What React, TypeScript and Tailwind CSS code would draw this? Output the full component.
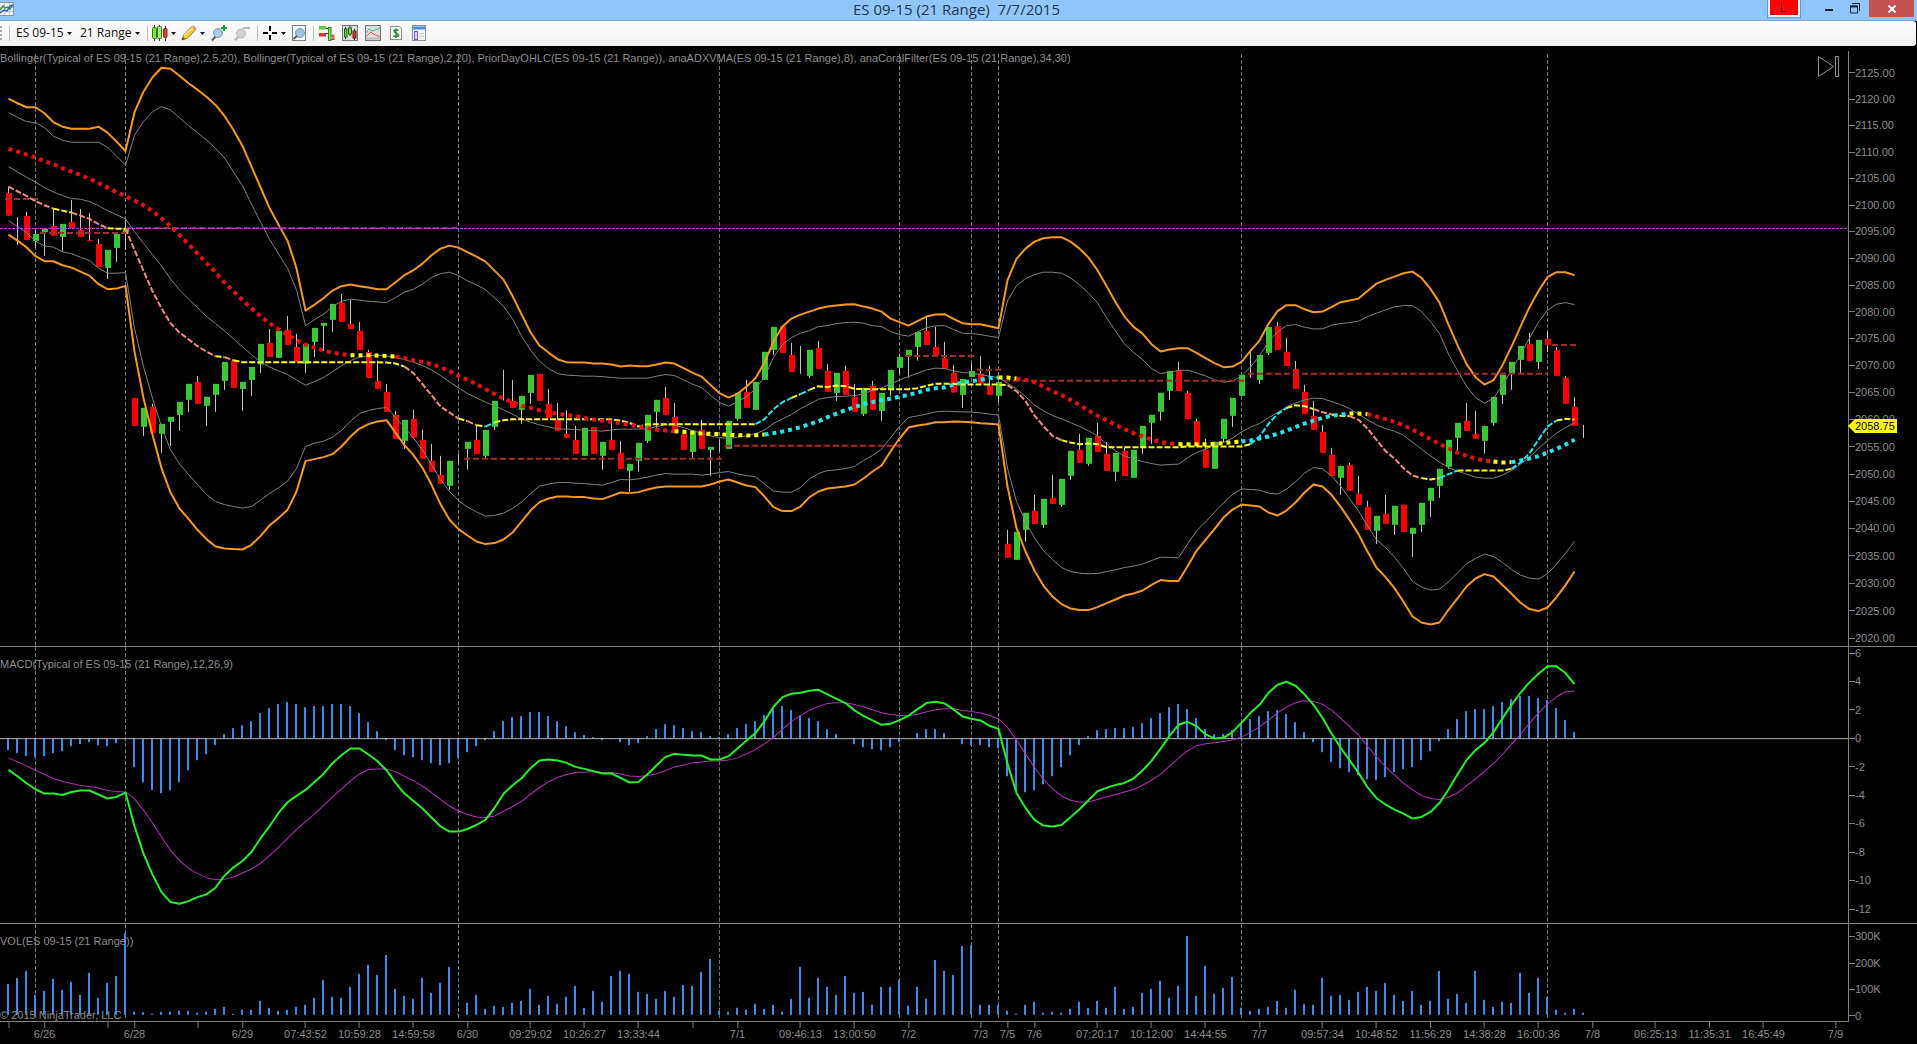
import React from "react";

/* ------------------------------------------------------------------ */
/* Geometry: one bar every 9 units; levels are stored in thirds of a   */
/* unit, counted down from the given origin.                           */
/* ------------------------------------------------------------------ */
const STEP = 9;
const barX = (i: number) => STEP * i + 8.5;
const levels = (origin: number, values: number[]) => values.map((v) => origin + v / 3);

const upperOuter = [
  ...levels(50, [146, 160, 172, 172, 190, 217, 230, 236, 236, 236, 230, 248, 275, 303, 187, 125, 82, 53, 56, 77, 100, 119, 140, 165, 198, 240, 288, 350, 412, 474, 524, 572, 655, 782, 764, 745, 722, 709, 704, 709, 713, 718, 718, 697, 676, 661, 641, 616, 596, 587, 593]),
  ...levels(230, [67, 80, 95, 122, 149, 198, 253, 307, 347, 368, 388, 397, 398, 398, 401, 401, 404, 410, 407, 409, 409, 404, 398, 401, 415, 428, 440, 465, 490, 503, 492, 470, 445, 398, 335, 290, 266, 254, 245, 236, 230, 227, 224, 223, 230, 236, 245, 266, 277, 287, 274, 260, 254]),
  ...levels(220, [283, 297, 310, 313, 313, 319, 325, 181, 117, 86, 65, 55, 52, 52, 65, 86, 113, 151, 198, 246, 290, 321, 341, 373, 395, 389, 385, 385, 399, 415, 430, 442, 440, 426, 393, 362, 312, 274, 256, 256, 268, 277, 275, 262, 247, 242, 236, 213, 191, 180, 170, 160, 155, 174, 207, 248, 314, 376, 432, 472, 494, 481, 436, 380, 320, 262, 213, 172, 157, 157, 166]),
];
const upperInner = [
  ...levels(50, [188, 202, 215, 218, 233, 259, 271, 277, 277, 277, 277, 292, 318, 346, 256, 214, 185, 170, 180, 203, 227, 248, 270, 295, 324, 366, 407, 463, 516, 568, 612, 655, 720, 827, 809, 793, 770, 754, 748, 751, 754, 756, 758, 743, 727, 718, 702, 683, 671, 667, 677]),
  ...levels(230, [153, 165, 179, 204, 229, 267, 318, 361, 394, 416, 431, 436, 437, 439, 439, 440, 443, 445, 445, 445, 445, 439, 434, 437, 450, 463, 473, 496, 518, 529, 516, 500, 478, 441, 382, 344, 323, 310, 302, 290, 287, 281, 278, 277, 280, 287, 290, 305, 314, 319, 306, 293, 288]),
  ...levels(220, [317, 329, 340, 341, 344, 349, 353, 243, 197, 176, 164, 157, 157, 160, 174, 195, 219, 249, 293, 333, 373, 397, 419, 446, 461, 457, 452, 451, 459, 468, 480, 487, 484, 469, 441, 409, 366, 336, 317, 314, 322, 327, 327, 316, 311, 308, 304, 290, 280, 270, 261, 257, 257, 275, 305, 341, 403, 452, 499, 533, 550, 536, 495, 452, 404, 355, 307, 271, 253, 248, 254]),
];
const middle = [
  ...levels(50, [350, 366, 382, 396, 413, 426, 437, 446, 448, 455, 467, 482, 494, 507, 545, 580, 614, 648, 687, 720, 747, 773, 800, 821, 843, 867, 891, 914, 936, 951, 963, 974, 990, 1006, 995, 983, 965, 948, 932, 922, 917, 916, 918, 923, 929, 937, 947, 960, 977, 996, 1014]),
  ...levels(230, [491, 504, 517, 527, 540, 553, 567, 577, 585, 591, 597, 598, 599, 601, 602, 604, 600, 598, 598, 598, 597, 590, 585, 586, 593, 602, 610, 618, 623, 626, 622, 618, 611, 601, 581, 567, 554, 536, 523, 508, 503, 500, 499, 497, 493, 481, 474, 463, 450, 440, 430, 420, 415]),
  ...levels(220, [446, 453, 458, 460, 464, 469, 473, 490, 507, 530, 556, 573, 587, 597, 608, 620, 633, 648, 673, 693, 708, 718, 725, 731, 736, 734, 733, 714, 698, 688, 676, 668, 655, 636, 622, 611, 594, 578, 561, 549, 540, 535, 536, 545, 554, 566, 583, 600, 615, 626, 634, 646, 667, 688, 708, 727, 743, 754, 763, 772, 775, 775, 766, 752, 733, 712, 686, 662, 640, 623, 609]),
];
const lowerInner = [
  ...levels(50, [512, 530, 548, 574, 588, 592, 606, 611, 622, 632, 655, 670, 670, 668, 835, 950, 1045, 1130, 1200, 1242, 1274, 1304, 1334, 1355, 1364, 1370, 1375, 1370, 1351, 1331, 1314, 1294, 1256, 1190, 1180, 1174, 1162, 1142, 1114, 1091, 1082, 1076, 1073, 1102, 1132, 1165, 1200, 1245, 1290, 1325, 1352]),
  ...levels(230, [832, 846, 859, 857, 850, 836, 817, 791, 769, 763, 758, 758, 760, 761, 764, 766, 758, 749, 750, 747, 742, 736, 731, 733, 733, 733, 736, 733, 728, 725, 732, 737, 741, 763, 784, 787, 787, 773, 747, 731, 722, 720, 716, 710, 692, 677, 658, 624, 590, 563, 558, 553, 546]),
  ...levels(220, [574, 575, 576, 577, 579, 583, 586, 745, 845, 905, 954, 993, 1019, 1043, 1055, 1060, 1062, 1061, 1055, 1050, 1043, 1039, 1033, 1022, 1012, 1013, 1014, 973, 933, 907, 877, 849, 824, 807, 809, 811, 820, 823, 808, 786, 760, 743, 747, 768, 799, 836, 873, 918, 959, 983, 1012, 1046, 1085, 1102, 1111, 1108, 1086, 1059, 1032, 1016, 1003, 1010, 1028, 1049, 1066, 1075, 1078, 1062, 1033, 1000, 965]),
];
const lowerOuter = [
  ...levels(50, [554, 572, 592, 619, 634, 634, 646, 653, 665, 677, 703, 718, 716, 708, 905, 1045, 1155, 1255, 1328, 1376, 1407, 1440, 1468, 1490, 1496, 1498, 1499, 1485, 1459, 1427, 1405, 1380, 1325, 1234, 1228, 1222, 1213, 1190, 1160, 1136, 1123, 1115, 1111, 1148, 1186, 1216, 1254, 1305, 1363, 1410, 1438]),
  ...levels(230, [917, 935, 943, 940, 929, 908, 875, 842, 817, 806, 800, 800, 802, 802, 806, 808, 798, 788, 790, 787, 779, 773, 770, 770, 770, 770, 770, 764, 755, 749, 758, 767, 772, 800, 832, 844, 844, 830, 802, 785, 776, 773, 770, 764, 746, 725, 707, 665, 626, 593, 587, 583, 577]),
  ...levels(220, [607, 605, 606, 607, 610, 612, 614, 800, 925, 995, 1052, 1098, 1130, 1153, 1166, 1171, 1171, 1162, 1150, 1139, 1127, 1121, 1112, 1095, 1081, 1084, 1084, 1040, 993, 960, 928, 893, 869, 854, 857, 860, 878, 887, 872, 848, 818, 794, 800, 825, 860, 900, 943, 995, 1044, 1072, 1105, 1146, 1190, 1208, 1214, 1208, 1170, 1136, 1100, 1076, 1063, 1070, 1096, 1122, 1149, 1168, 1174, 1163, 1132, 1096, 1055]),
];
const adxvma = [
  ...levels(50, [410, 424, 438, 454, 466, 476, 482, 488, 497, 507, 523, 535, 536, 536, 600, 663, 724, 775, 820, 848, 868, 889, 905, 919, 922, 931, 937, 937, 937, 937, 937, 937, 937, 937, 937, 937, 937, 937, 937, 937, 937, 937, 938, 941, 950, 970, 1003, 1036, 1070, 1088, 1106]),
  ...levels(230, [574, 586, 590, 578, 571, 568, 568, 568, 568, 568, 568, 568, 568, 568, 568, 568, 569, 572, 579, 590, 583, 583, 583, 583, 583, 583, 583, 583, 583, 583, 583, 583, 583, 568, 538, 517, 504, 493, 480, 469, 472, 467, 469, 477, 478, 478, 478, 478, 478, 478, 475, 468, 462]),
  ...levels(220, [492, 492, 494, 494, 494, 494, 494, 496, 514, 543, 587, 619, 648, 661, 668, 673, 671, 673, 682, 682, 682, 682, 682, 682, 682, 682, 682, 680, 680, 680, 680, 680, 680, 680, 673, 650, 612, 582, 565, 556, 559, 568, 577, 584, 588, 589, 600, 626, 660, 694, 716, 745, 767, 775, 779, 775, 763, 752, 752, 752, 752, 752, 752, 747, 728, 700, 660, 620, 602, 597, 599]),
];
const coral = [
  ...levels(50, [297, 305, 314, 322, 334, 343, 355, 365, 375, 386, 399, 413, 427, 439, 452, 466, 484, 505, 528, 556, 583, 611, 640, 667, 698, 724, 751, 775, 799, 820, 838, 855, 871, 884, 893, 902, 908, 913, 916, 916, 916, 917, 918, 920, 925, 931, 936, 943, 952, 964, 978]),
  ...levels(230, [450, 463, 478, 493, 506, 518, 528, 534, 541, 547, 552, 556, 559, 564, 569, 573, 576, 580, 585, 590, 595, 600, 602, 604, 606, 608, 611, 612, 613, 615, 616, 617, 616, 614, 610, 605, 599, 592, 583, 574, 562, 551, 541, 532, 523, 517, 511, 507, 500, 495, 488, 480, 475]),
  ...levels(220, [503, 494, 488, 484, 480, 475, 473, 473, 476, 480, 487, 500, 514, 526, 540, 555, 572, 588, 601, 615, 628, 640, 649, 659, 666, 671, 673, 673, 673, 673, 672, 670, 667, 665, 662, 656, 650, 642, 632, 622, 611, 602, 594, 588, 584, 581, 581, 583, 590, 598, 606, 616, 629, 643, 658, 672, 686, 698, 707, 716, 722, 725, 728, 727, 722, 716, 709, 698, 687, 674, 660]),
];

type Run = [until: number, color: string];
const SALMON = "#f08c80";
const YELLOW = "#ffff1e";
const CYAN = "#22e6ee";
const RED = "#e81010";
const adxvmaRuns: Run[] = [
  [5, SALMON], [7, YELLOW], [11, SALMON], [13, YELLOW], [23, SALMON], [24, YELLOW], [25, SALMON], [44, YELLOW], [50, SALMON], [51, YELLOW],
  [52, SALMON], [53, YELLOW], [54, CYAN], [83, YELLOW], [87, CYAN], [88, YELLOW], [89, CYAN], [111, YELLOW], [117, SALMON], [138, YELLOW],
  [142, CYAN], [145, YELLOW], [147, SALMON], [149, YELLOW], [157, SALMON], [159, YELLOW], [161, CYAN], [167, YELLOW], [172, CYAN], [174, YELLOW],
];
const coralRuns: Run[] = [
  [38, RED], [43, YELLOW], [74, RED], [84, YELLOW], [110, CYAN], [112, YELLOW], [130, RED], [137, YELLOW], [149, CYAN], [151, YELLOW], [165, RED], [167, YELLOW], [174, CYAN],
];

/* Candles: direction (u = up, d = down, n = unchanged), body top, body bottom, high, low */
type Candle = ["u" | "d" | "n", number, number, number?, number?];
const candleGroups: { first: number; origin: number; rows: Candle[] }[] = [
  {
    first: 0,
    origin: 50,
    rows: [
      ["d", 429, 497, 410], ["n", 501, 585], ["d", 498, 570, 486], ["u", 552, 573, 540, 594], ["u", 537, 546, 537, 618], ["d", 528, 557, 476],
      ["u", 522, 561, 522, 605], ["d", 516, 534, 450], ["d", 540, 561, 477], ["d", 570, 573, 489], ["d", 582, 651, 567], ["u", 600, 654, 600, 687],
      ["u", 552, 594, 552, 636], ["u", 537, 546, 507, 600], ["d", 1044, 1128], ["u", 1074, 1131, 1074, 1158], ["d", 1071, 1149, 1062],
      ["u", 1122, 1152, 1122, 1209], ["u", 1101, 1116, 1101, 1188], ["u", 1056, 1095, 1056, 1143], ["u", 1002, 1050, 1002, 1086], ["d", 996, 1062, 978],
      ["u", 1041, 1068, 1041, 1128], ["u", 1002, 1035, 1002, 1086], ["u", 936, 993, 936, 1020], ["d", 933, 1014], ["u", 996, 1017, 996, 1083],
      ["u", 951, 990, 951, 1038], ["u", 882, 944, 882, 969], ["d", 879, 921, 837], ["u", 843, 924], ["d", 840, 885, 798], ["d", 891, 936, 852],
      ["u", 882, 942, 882, 969], ["u", 834, 876, 834, 921], ["u", 819, 828, 819, 903], ["u", 762, 810, 762, 846], ["d", 759, 816, 732],
      ["d", 822, 837, 750], ["d", 843, 900, 816], ["d", 906, 984, 900], ["d", 993, 1017, 932], ["d", 1026, 1086, 1002], ["d", 1095, 1167, 1083],
      ["u", 1110, 1173, 1110, 1197], ["d", 1107, 1164, 1080], ["d", 1170, 1227, 1140], ["d", 1233, 1266, 1182], ["d", 1275, 1302, 1218],
      ["u", 1233, 1308, 1233, 1320], ["n", 1212, 1240], ["u", 1176, 1197, 1176, 1260],
    ],
  },
  {
    first: 52,
    origin: 230,
    rows: [
      ["d", 630, 672, 586], ["u", 600, 678, 600, 687], ["u", 513, 591, 513, 600], ["n", 420, 512], ["d", 513, 534, 450], ["u", 498, 540, 498, 582],
      ["u", 435, 489, 435, 522], ["d", 432, 513], ["d", 522, 564, 477], ["d", 570, 603, 519], ["d", 612, 624, 541], ["d", 630, 672, 588],
      ["u", 594, 678], ["d", 591, 672], ["u", 636, 678, 636, 720], ["d", 630, 660, 576], ["d", 669, 717, 633], ["u", 702, 723, 702, 786],
      ["u", 639, 693, 639, 726], ["u", 555, 633, 555, 639], ["u", 510, 546, 510, 594], ["d", 504, 555, 471], ["d", 561, 606, 519], ["d", 612, 660, 600],
      ["u", 603, 666, 603, 684], ["d", 600, 657, 570], ["u", 651, 660, 651, 738], ["n", 630, 665], ["u", 573, 657], ["u", 489, 567, 489, 573],
      ["d", 486, 534, 450], ["u", 456, 540], ["u", 366, 450], ["u", 291, 360, 291, 375], ["d", 288, 369], ["d", 375, 426, 339], ["n", 348, 432],
      ["u", 360, 438, 360, 444], ["d", 354, 417, 333], ["d", 423, 486, 402], ["u", 429, 489, 429, 513], ["d", 423, 495, 408], ["d", 501, 546, 462],
      ["u", 474, 552, 474, 558], ["d", 468, 540, 453], ["u", 489, 543, 489, 573], ["u", 420, 480, 420, 498], ["u", 381, 414, 373, 434],
      ["u", 360, 378, 360, 443], ["u", 306, 351, 306, 392], ["d", 303, 345, 262], ["d", 351, 378, 291],
    ],
  },
  {
    first: 104,
    origin: 220,
    rows: [
      ["d", 414, 447, 366], ["d", 459, 518, 435], ["u", 477, 525, 477, 564], ["u", 453, 471, 430], ["d", 461, 492, 408], ["d", 498, 525, 438],
      ["u", 486, 528, 486, 546], ["d", 972, 1014, 930], ["u", 936, 1020], ["u", 879, 930, 879, 966], ["d", 873, 912, 825], ["u", 837, 915, 837, 924],
      ["d", 834, 852, 765], ["u", 777, 855, 777, 861], ["u", 693, 768, 693, 780], ["d", 690, 729, 642], ["u", 654, 732, 654, 738], ["d", 648, 696, 609],
      ["d", 702, 753, 666], ["u", 699, 756, 699, 783], ["d", 693, 768, 683], ["u", 690, 774], ["u", 618, 684, 618, 702], ["u", 585, 609, 585, 672],
      ["u", 519, 576, 519, 602], ["u", 453, 513, 453, 540], ["d", 450, 513, 426], ["d", 519, 597, 513], ["d", 603, 678, 597], ["d", 690, 744, 657],
      ["u", 666, 747], ["u", 597, 657, 597, 669], ["u", 534, 588, 534, 621], ["u", 465, 528], ["n", 393, 474], ["u", 405, 480, 405, 492],
      ["u", 321, 399, 321, 405], ["d", 318, 390, 306], ["d", 396, 438, 354], ["d", 447, 507, 423], ["d", 516, 582, 495], ["d", 588, 630, 543],
      ["d", 636, 699, 615], ["d", 705, 768, 684], ["u", 738, 774, 738, 825], ["d", 735, 813, 729], ["d", 822, 855, 768], ["d", 861, 930, 843],
      ["u", 888, 933, 888, 972], ["d", 882, 912, 825], ["u", 858, 915, 858, 945], ["d", 855, 936], ["u", 924, 942, 924, 1011], ["u", 849, 915, 849, 936],
      ["u", 804, 843, 804, 891], ["u", 747, 798, 747, 834], ["u", 660, 741, 660, 747], ["u", 609, 654, 609, 693], ["d", 603, 633, 549],
      ["d", 642, 657, 573], ["u", 618, 663, 618, 702], ["u", 531, 609, 531, 618], ["u", 465, 525, 465, 552], ["u", 426, 459, 426, 510],
      ["u", 378, 420, 378, 459], ["d", 372, 423, 339], ["u", 360, 426, 360, 447], ["d", 357, 375, 334, 396], ["d", 390, 468, 381],
      ["d", 474, 552, 468], ["d", 561, 618, 531], ["n", 615, 654],
    ],
  },
];

const histogram = levels(640, [
  330, 339, 348, 351, 348, 339, 333, 318, 312, 306, 315, 318, 309, 297, 381, 426, 450, 459, 450, 426, 390, 360, 342, 315, 282, 264, 255, 243, 219, 204, 192, 186, 192, 201, 198, 198, 192, 192, 198, 219, 246, 273, 300, 330, 345, 351, 360, 369, 375, 369, 353, 336, 318, 300, 273, 243, 231, 228, 216, 216, 228, 243, 258, 276, 285, 291, 300, 297, 306, 315, 309,
  288, 267, 252, 255, 264, 273, 276, 288, 291, 282, 264, 252, 243, 225, 204, 198, 210, 225, 234, 243, 267, 282, 295, 312, 321, 327, 330, 321, 306, 295, 279, 267, 267, 279, 296, 312, 315, 315, 321, 324, 408, 453, 456, 450, 432, 408, 381, 345, 315, 288, 270, 267, 264, 264, 261, 249, 234, 219, 201, 192, 207, 234, 267, 282, 282, 270, 252, 237, 228,
  213, 210, 222, 246, 276, 306, 336, 366, 384, 396, 405, 417, 420, 411, 396, 387, 381, 360, 333, 303, 267, 237, 213, 207, 207, 198, 186, 177, 168, 168, 174, 180, 204, 240, 276,
]);
const macdLine = levels(640, [
  389, 408, 429, 447, 460, 460, 464, 455, 451, 451, 463, 475, 470, 457, 558, 640, 703, 755, 785, 790, 782, 770, 762, 742, 706, 681, 662, 635, 594, 558, 518, 486, 467, 449, 425, 401, 369, 345, 325, 325, 343, 363, 390, 428, 460, 482, 505, 532, 558, 574, 574, 566, 554, 539, 503, 461, 435, 414, 384, 361, 358, 361, 368, 380, 386, 393, 400, 400, 413, 427, 425,
  402, 376, 350, 341, 344, 346, 346, 358, 358, 348, 325, 301, 279, 243, 200, 171, 161, 158, 152, 149, 163, 176, 189, 211, 227, 241, 254, 251, 240, 227, 207, 189, 185, 190, 208, 229, 236, 241, 257, 266, 370, 458, 503, 539, 556, 559, 554, 531, 507, 480, 453, 443, 434, 428, 415, 391, 362, 326, 287, 254, 245, 258, 283, 295, 293, 276, 248, 218, 194,
  158, 134, 125, 137, 163, 194, 233, 280, 322, 360, 398, 441, 474, 493, 508, 520, 535, 530, 515, 488, 448, 403, 360, 330, 308, 276, 235, 194, 158, 127, 101, 79, 79, 99, 132,
]);
const signalLine = levels(640, [
  353, 365, 377, 390, 403, 415, 424, 430, 436, 439, 443, 451, 454, 455, 476, 509, 548, 590, 630, 660, 684, 700, 712, 718, 717, 710, 698, 686, 669, 646, 621, 594, 567, 545, 521, 496, 470, 447, 422, 401, 388, 386, 386, 395, 408, 422, 438, 457, 478, 497, 512, 523, 530, 532, 527, 513, 499, 484, 462, 442, 425, 412, 403, 397, 396, 394, 397, 397, 401, 407, 409,
  406, 401, 391, 380, 374, 368, 365, 362, 362, 359, 353, 341, 328, 311, 292, 267, 244, 226, 211, 199, 190, 188, 188, 193, 200, 209, 218, 223, 226, 226, 223, 215, 209, 206, 206, 211, 214, 219, 226, 236, 262, 300, 341, 382, 418, 446, 467, 480, 485, 485, 478, 470, 463, 455, 448, 435, 420, 402, 379, 354, 332, 317, 311, 308, 304, 299, 291, 276, 260,
  240, 218, 201, 188, 182, 184, 193, 210, 234, 259, 285, 318, 350, 380, 404, 429, 449, 466, 475, 478, 470, 458, 437, 416, 394, 370, 343, 312, 283, 249, 219, 191, 170, 155, 153,
]);
const volume = levels(640, [
  1032, 1014, 993, 1065, 1053, 1017, 1050, 1026, 1065, 999, 1074, 1029, 1008, 879, 1116, 1117, 1122, 1116, 1116, 1113, 1113, 1119, 1116, 1107, 1101, 1122, 1110, 1110, 1083, 1104, 1113, 1110, 1101, 1095, 1074, 1020, 1071, 1074, 1041, 1002, 975, 1005, 945, 1047, 1068, 1077, 1014, 1059, 1029, 981, 1122, 1089, 1065, 1107, 1098, 1101, 1089, 1083, 1047, 1095, 1068, 1092, 1071, 1038, 1104, 1053, 1086, 1008, 993, 1002, 1056,
  1062, 1077, 1053, 1071, 1035, 1038, 996, 957, 1113, 1116, 1104, 1110, 1092, 1107, 1095, 1116, 1077, 981, 1074, 1014, 1041, 1065, 1008, 1059, 1056, 1095, 1041, 1041, 1020, 1098, 1041, 1077, 960, 993, 1005, 918, 915, 1095, 1095, 1095, 1113, 1122, 1095, 1086, 1119, 1116, 1119, 1107, 1086, 1104, 1083, 1104, 1041, 1107, 1101, 1059, 1047, 1023, 1074, 1038, 888, 1068, 978, 1062, 1044, 1011, 1104, 1113, 1107,
  1101, 1083, 1104, 1050, 1092, 1095, 1014, 1068, 1065, 1080, 1056, 1041, 1053, 1029, 1065, 1083, 1053, 1095, 1083, 993, 1077, 1062, 1089, 993, 1080, 1101, 1086, 1089, 999, 1059, 1014, 1071, 1110, 1119, 1107, 1119,
]);

const sessionBars = [3, 13, 50, 79, 99, 107, 110, 137, 171];
const priorDayLines: [number, number, number][] = [
  [5, 38, 199], [40, 129, 233], [127, 459, 228], [464, 722, 459], [725, 902, 446], [905, 974, 356], [977, 1001, 370], [1004, 1245, 381], [1248, 1548, 374], [1552, 1577, 345],
];
const timeTicks: [number, string][] = [
  [0, ""], [4, "6/26"], [11, ""], [14, "6/28"], [21, ""], [26, "6/29"], [33, "07:43:52"], [39, "10:59:28"], [45, "14:59:58"], [51, "6/30"],
  [58, "09:29:02"], [64, "10:26:27"], [70, "13:33:44"], [76, ""], [81, "7/1"], [88, "09:46:13"], [94, "13:00:50"], [100, "7/2"], [108, "7/3"],
  [111, "7/5"], [114, "7/6"], [121, "07:20:17"], [127, "10:12:00"], [133, "14:44:55"], [139, "7/7"], [146, "09:57:34"], [152, "10:48:52"],
  [158, "11:56:29"], [164, "14:38:28"], [170, "16:00:36"], [176, "7/8"], [183, "06:25:13"], [189, "11:35:31"], [195, "16:45:49"], [203, "7/9"],
];

const PLOT_WIDTH = 1848;
const points = (ys: number[], from = 0, to = ys.length - 1) =>
  ys.slice(from, to + 1).map((y, k) => `${barX(from + k)},${y.toFixed(1)}`).join(" ");

/* ------------------------------------------------------------------ */
/* Chart pieces                                                        */
/* ------------------------------------------------------------------ */
function Line({ ys, color, width }: { ys: number[]; color: string; width: number }) {
  return <polyline points={points(ys)} fill="none" stroke={color} strokeWidth={width} strokeLinejoin="round" />;
}

function ColoredRuns({ ys, runs, width, dash }: { ys: number[]; runs: Run[]; width: number; dash: string }) {
  return (
    <g fill="none" strokeWidth={width} strokeDasharray={dash}>
      {runs.map(([until, color], k) => (
        <polyline key={until} points={points(ys, k ? runs[k - 1][0] : 0, until)} stroke={color} />
      ))}
    </g>
  );
}

function Sessions({ top, bottom }: { top: number; bottom: number }) {
  return (
    <g stroke="#767676" strokeWidth={1} strokeDasharray="4 2">
      {sessionBars.map((i) => (
        <line key={i} x1={barX(i)} x2={barX(i)} y1={top} y2={bottom} />
      ))}
    </g>
  );
}

function Plot({ top, height, title, children }: { top: number; height: number; title: string; children: React.ReactNode }) {
  return (
    <svg
      role="img"
      aria-label={title}
      className="absolute inset-0 block h-full w-full"
      viewBox={`0 ${top} ${PLOT_WIDTH} ${height}`}
      preserveAspectRatio="none"
    >
      {children}
    </svg>
  );
}

function Scale({ marks, className = "" }: { marks: { label: string; at: number }[]; className?: string }) {
  return (
    <div className={`relative w-[69px] shrink-0 border-l border-[#808080] ${className}`}>
      {marks.map(({ label, at }) => (
        <div key={label} className="absolute left-0 flex h-4 -translate-y-1/2 items-center" style={{ top: `${at * 100}%` }}>
          <span className="h-px w-[6px] bg-[#808080]" />
          <span>{label}</span>
        </div>
      ))}
    </div>
  );
}

const priceAt = (p: number) => 73 + 11165 * Math.log(2125 / p);
const priceMarks = Array.from({ length: 22 }, (_, k) => 2125 - 5 * k).map((p) => ({ label: p.toFixed(2), at: (priceAt(p) - 51) / 595 }));
const macdMarks = [6, 4, 2, 0, -2, -4, -6, -8, -10, -12].map((v) => ({ label: String(v), at: (91.5 - 14.2 * v) / 276 }));
const volumeMarks = [300, 200, 100, 0].map((v) => ({ label: v ? `${v}K` : "0", at: (91 - 0.262 * v) / 97 }));

function PricePanel() {
  return (
    <section className="flex min-h-0 flex-[601_1_0%] border-b border-[#808080]">
      <div className="relative min-w-0 flex-1 overflow-hidden">
        <Plot top={46} height={600} title="Price">
          <Sessions top={54} bottom={646} />
          {candleGroups.map(({ first, origin, rows }) =>
            rows.map(([dir, top, bottom, high = top, low = bottom], k) => {
              const i = first + k;
              return (
                <g key={i}>
                  <rect x={STEP * i + 8} y={origin + high / 3} width={1} height={(low - high) / 3} fill="#c4c4c4" />
                  {dir !== "n" && (
                    <rect x={STEP * i + 6} y={origin + top / 3} width={6} height={(bottom - top) / 3} fill={dir === "u" ? "#37c832" : "#fa0000"} />
                  )}
                </g>
              );
            }),
          )}
          <Line ys={upperInner} color="#828282" width={1} />
          <Line ys={middle} color="#828282" width={1} />
          <Line ys={lowerInner} color="#828282" width={1} />
          <Line ys={upperOuter} color="#f59a1e" width={2} />
          <Line ys={lowerOuter} color="#f59a1e" width={2} />
          <g stroke="#9c302c" strokeWidth={2} strokeDasharray="6 3">
            {priorDayLines.map(([x1, x2, y]) => (
              <line key={x1} x1={x1} x2={x2} y1={y} y2={y} />
            ))}
          </g>
          <line x1={0} x2={PLOT_WIDTH} y1={228.5} y2={228.5} stroke="#c83cd2" strokeWidth={1} strokeDasharray="3 1" />
          <ColoredRuns ys={adxvma} runs={adxvmaRuns} width={2} dash="6 2" />
          <ColoredRuns ys={coral} runs={coralRuns} width={4} dash="4 4" />
        </Plot>
        <h2 className="absolute left-0 top-[4px] whitespace-nowrap leading-4 text-[11px]">
          Bollinger(Typical of ES 09-15 (21 Range),2.5,20), Bollinger(Typical of ES 09-15 (21 Range),2,20), PriorDayOHLC(ES 09-15 (21 Range)),
          anaADXVMA(ES 09-15 (21 Range),8), anaCoralFilter(ES 09-15 (21 Range),34,30)
        </h2>
        <button type="button" aria-label="Go to last bar" className="absolute right-[8px] top-[9px]">
          <svg width="24" height="24" viewBox="0 0 24 24" fill="none" stroke="#909090">
            <path d="M2.5 1.5v20l15-10z" />
            <path d="M19.5 1.5h3v20h-3z" />
          </svg>
        </button>
      </div>
      <div className="relative flex">
        <Scale marks={priceMarks} className="mt-[5px]" />
        <output
          aria-label="Last price"
          className="absolute left-0 flex -translate-y-1/2 items-center text-black"
          style={{ top: `${((priceAt(2058.75) - 46) / 600) * 100}%` }}
        >
          <svg width="7" height="14" viewBox="0 0 7 14" fill="#ffff00">
            <path d="M0 7l7-7v14z" />
          </svg>
          <span className="bg-[#ffff00] pr-[2px] leading-[14px]">2058.75</span>
        </output>
      </div>
    </section>
  );
}

function MacdPanel() {
  const zero = 738;
  return (
    <section className="flex min-h-0 flex-[277_1_0%] border-b border-[#808080]">
      <div className="relative min-w-0 flex-1 overflow-hidden">
        <Plot top={647} height={276} title="MACD">
          <Sessions top={647} bottom={923} />
          {histogram.map((y, i) => (
            <rect key={i} x={STEP * i + 7} y={Math.min(y, zero)} width={2} height={Math.abs(y - zero)} fill="#3a8be4" />
          ))}
          <rect x={0} y={zero} width={PLOT_WIDTH} height={1} fill="#a9b5a9" />
          <Line ys={signalLine} color="#b42ebc" width={1} />
          <Line ys={macdLine} color="#28f028" width={2} />
        </Plot>
        <h2 className="absolute left-0 top-[9px] whitespace-nowrap leading-4 text-[11px]">MACD(Typical of ES 09-15 (21 Range),12,26,9)</h2>
      </div>
      <Scale marks={macdMarks} />
    </section>
  );
}

function VolumePanel() {
  return (
    <section className="flex min-h-0 flex-[98_1_0%]">
      <div className="relative min-w-0 flex-1 overflow-hidden border-b border-[#808080]">
        <Plot top={924} height={97} title="Volume">
          <Sessions top={924} bottom={1019} />
          {volume.map((y, i) => (
            <rect key={i} x={STEP * i + 7} y={y} width={2} height={1015 - y} fill="#3a8be4" />
          ))}
        </Plot>
        <h2 className="absolute left-0 top-[9px] whitespace-nowrap leading-4 text-[11px]">VOL(ES 09-15 (21 Range))</h2>
        <p className="absolute -bottom-[2px] left-0 whitespace-nowrap leading-4">© 2015 NinjaTrader, LLC</p>
      </div>
      <Scale marks={volumeMarks} />
    </section>
  );
}

function TimeAxis() {
  return (
    <div className="flex h-[22px] shrink-0">
      <div className="relative flex-1">
        {timeTicks.map(([i, label]) => (
          <div
            key={i}
            className="absolute top-0 flex -translate-x-1/2 flex-col items-center"
            style={{ left: `${(barX(i) / PLOT_WIDTH) * 100}%` }}
          >
            <span className="h-[6px] w-px bg-[#808080]" />
            <span className="leading-3">{label}</span>
          </div>
        ))}
      </div>
      <div className="w-[69px]" />
    </div>
  );
}

/* ------------------------------------------------------------------ */
/* Window chrome                                                       */
/* ------------------------------------------------------------------ */
function TitleBar() {
  return (
    <header className="flex h-[21px] shrink-0 items-start border-b border-[#7ba6d6] bg-[#91c6fc]">
      <svg className="mt-[2px] shrink-0" width="14" height="14" viewBox="0 0 14 14">
        <path d="M0 .5h13.500v13H0" fill="#eef2f8" stroke="#8f9399" />
        <path d="M4.500 1v12M9.500 1v12M0 5.500h13M0 9.500h13" stroke="#c4c6e0" />
        <path d="M0 8l3-4 2 2 3-1 2 2 3-4" fill="none" stroke="#3c9a4c" strokeWidth="1.500" />
        <path d="M0 11l4-3 3 1 3-5 3-1" fill="none" stroke="#3565b8" strokeWidth="1.500" />
      </svg>
      <h1 className="ml-[132px] flex-1 whitespace-pre text-center font-['Open_Sans','Noto_Sans',sans-serif] text-[15px] leading-[19px] text-[#20364e]">
        {"ES 09-15 (21 Range)  7/7/2015"}
      </h1>
      <button type="button" aria-label="Link" className="h-[18px] w-[34px] border border-t-0 border-[#5b9ae6] bg-[#e8eefc] px-[2px] pb-[2px]">
        <span className="flex h-full items-center justify-center bg-[#fa0500]">
          <svg width="6" height="9" viewBox="0 0 6 9" fill="none" stroke="#5a1010">
            <path d="M.5 0v8.500H5" />
          </svg>
        </span>
      </button>
      <button type="button" aria-label="Minimize" className="ml-[14px] flex h-[17px] w-[28px] items-center justify-center">
        <svg width="8" height="9" viewBox="0 0 8 9" fill="#1c2430">
          <path d="M0 5h8v2H0z" />
        </svg>
      </button>
      <button type="button" aria-label="Restore" className="mr-[2px] flex h-[17px] w-[24px] items-center justify-center">
        <svg width="10" height="11" viewBox="0 0 10 11" fill="none" stroke="#1c2430">
          <path d="M.5 3h7v7h-7z" strokeWidth="1" />
          <path d="M0 3.500h8" strokeWidth="2" />
          <path d="M2 .5h7.500V8" />
        </svg>
      </button>
      <button type="button" aria-label="Close" className="mr-[3px] flex h-[17px] w-[45px] items-center justify-center bg-[#c75050]">
        <svg width="8" height="8" viewBox="0 0 8 8" fill="none" stroke="#fff" strokeWidth="2">
          <path d="M.5 .5l7 7M7.500 .5l-7 7" />
        </svg>
      </button>
    </header>
  );
}

const Caret = ({ className = "" }: { className?: string }) => (
  <svg className={className} width="5" height="3" viewBox="0 0 5 3" fill="#111">
    <path d="M0 0h5L2.500 3z" />
  </svg>
);
const Divider = () => <span className="h-[15px] w-px bg-[#bdbdbd]" />;

function Picker({ label, value, className }: { label: string; value: string; className: string }) {
  return (
    <div className={`relative flex items-center ${className}`}>
      <select
        aria-label={label}
        defaultValue={value}
        className="h-[20px] w-full appearance-none bg-transparent p-0 text-[12px] leading-[20px] text-[#111] outline-none"
      >
        <option>{value}</option>
      </select>
      <Caret className="pointer-events-none absolute right-0" />
    </div>
  );
}

function Tool({ label, menu, className = "", children }: { label: string; menu?: boolean; className?: string; children: React.ReactNode }) {
  return (
    <button type="button" aria-label={label} aria-haspopup={menu ? "menu" : undefined} className={`flex items-center gap-[3px] ${className}`}>
      <svg width="16" height="16" viewBox="0 0 16 16" fill="none">
        {children}
      </svg>
      {menu && <Caret />}
    </button>
  );
}

function Toolbar() {
  return (
    <div role="toolbar" aria-label="Chart" className="shrink-0 bg-black">
      <div className="mr-[1px] flex h-[25px] items-center rounded-r-[3px] bg-linear-to-b from-white to-[#efefef] pb-[1px] font-['Open_Sans','Noto_Sans',sans-serif]">
        <svg width="3" height="15" viewBox="0 0 3 15" fill="#a9a9a9">
          <path d="M0 0h2v2H0zM0 4h2v2H0zM0 8h2v2H0zM0 12h2v2H0z" />
        </svg>
        <span className="ml-[6px] flex">
          <Divider />
        </span>
        <Picker label="Instrument" value="ES 09-15" className="ml-[6px] w-[56px]" />
        <Picker label="Interval" value="21 Range" className="ml-[8px] w-[60px]" />
        <span className="ml-[7px] flex">
          <Divider />
        </span>
        <Tool label="Chart style" menu className="ml-[4px]">
          <path d="M2.500 0v16M7.500 0v16M13.500 1v15" stroke="#333" />
          <rect x="0.500" y="2.500" width="4" height="11" rx="1" fill="#7fe03c" stroke="#2e7a18" />
          <rect x="5.500" y="1.500" width="4" height="12" rx="1" fill="#a6f070" stroke="#2e7a18" />
          <rect x="11.500" y="3.500" width="3.500" height="9" rx="1" fill="#e0402c" stroke="#8c1c12" />
        </Tool>
        <Tool label="Drawing tools" menu className="ml-[5px]">
          <path d="M1 15l1.500-5L11 1.500 14.500 5 6 13.500z" fill="#f4cc3a" stroke="#a87a14" />
          <path d="M3 11L12 2.500" stroke="#fbe98a" strokeWidth="1.500" />
          <path d="M11 1.500L12.500 .5 15.500 3.500 14.500 5z" fill="#e8907c" />
          <path d="M1 15l1-3 2 2z" fill="#444" />
        </Tool>
        <Tool label="Zoom in" className="ml-[6px]">
          <path d="M1 15.500L5 11" stroke="#55585c" strokeWidth="2" />
          <circle cx="7" cy="8" r="4.500" fill="#a9cde6" stroke="#8f979e" />
          <path d="M13 0v6M10 3h6" stroke="#18a03c" strokeWidth="2" />
        </Tool>
        <Tool label="Zoom out" className="ml-[7px]">
          <path d="M1 15.500L5 11" stroke="#b5b5b5" strokeWidth="2" />
          <circle cx="7" cy="8.500" r="4.500" fill="#d2d2d2" stroke="#b9b9b9" />
          <path d="M9 3h7" stroke="#b5b5b5" strokeWidth="2" />
        </Tool>
        <span className="ml-[7px] flex">
          <Divider />
        </span>
        <Tool label="Crosshair" menu className="ml-[4px]">
          <path d="M8 1v5M8 10v5M1 8h5M10 8h5" stroke="#000" strokeWidth="2" />
        </Tool>
        <Tool label="Data box" className="ml-[5px]">
          <rect x="1.500" y="0.500" width="13" height="15" fill="#f4f8fa" stroke="#7d858c" />
          <circle cx="9" cy="8" r="4.500" fill="#9cc4e2" stroke="#7e99ac" />
          <path d="M2.500 14L6 11" stroke="#55585c" strokeWidth="2" />
        </Tool>
        <span className="ml-[6px] flex">
          <Divider />
        </span>
        <Tool label="Chart trader" className="ml-[5px]">
          <path d="M1 8.500h8M7 3.500h3M9.500 14.500h6M12 10.500h3" stroke="#333" />
          <rect x="0" y="1" width="7" height="3.500" fill="#5cc83c" />
          <rect x="0" y="8" width="7" height="3.500" fill="#e03030" />
          <rect x="9.500" y="2.500" width="2.500" height="13" fill="#8ae050" stroke="#2e8a1c" />
          <rect x="13" y="9.500" width="2.500" height="5" fill="#e86050" />
        </Tool>
        <Tool label="Data series" className="ml-[7px]">
          <rect x="0.500" y="0.500" width="15" height="15" fill="#d8dcd8" stroke="#777" />
          <path d="M3.500 2v12M8 1v10M12.500 4v11" stroke="#333" />
          <rect x="2.500" y="4" width="2.500" height="8" fill="#6ad040" stroke="#2c5c1c" />
          <rect x="6.500" y="3" width="3" height="6" fill="#7fe050" stroke="#2c5c1c" />
          <rect x="11" y="6" width="3" height="7" fill="#d83830" stroke="#6c1c14" />
        </Tool>
        <Tool label="Indicators" className="ml-[7px]">
          <rect x="0.500" y="0.500" width="15" height="15" fill="#dcdedf" stroke="#777" />
          <path d="M1 8l3-4 3 2 3-1 5-2" stroke="#4cae90" />
          <path d="M1 11l3-2 2-2 2 2 3 1 4 2" stroke="#e06a5c" />
          <path d="M1 13.500h14" stroke="#bcbcbc" strokeWidth="2" />
        </Tool>
        <Tool label="Strategies" className="ml-[7px]">
          <path d="M2.500 1.500h9l2 2v11h-11z" fill="#fff" stroke="#8a8a8a" />
          <path d="M10.500 5.500C10 4.500 6 4 6 6.200S10.500 8 10.500 10 6 12 5.500 10.500M8 3.500v9.500" stroke="#1f8a30" strokeWidth="1.500" />
        </Tool>
        <Tool label="Properties" className="ml-[7px]">
          <rect x="1.500" y="0.500" width="13" height="15" fill="#f2f2f6" stroke="#8490a8" />
          <path d="M2 3h12" stroke="#4c8ede" strokeWidth="3" />
          <rect x="3.500" y="6.500" width="3" height="8" fill="#dcd0f4" stroke="#7c5cd0" />
          <path d="M9 8.500h4M9 11.500h4" stroke="#d0d0d8" />
        </Tool>
      </div>
    </div>
  );
}

export default function App() {
  return (
    <main className="flex h-screen min-h-[480px] flex-col overflow-hidden bg-black font-['Liberation_Sans',Arial,sans-serif] text-[11px] text-[#8c8c8c]">
      <TitleBar />
      <Toolbar />
      <PricePanel />
      <MacdPanel />
      <VolumePanel />
      <TimeAxis />
    </main>
  );
}
